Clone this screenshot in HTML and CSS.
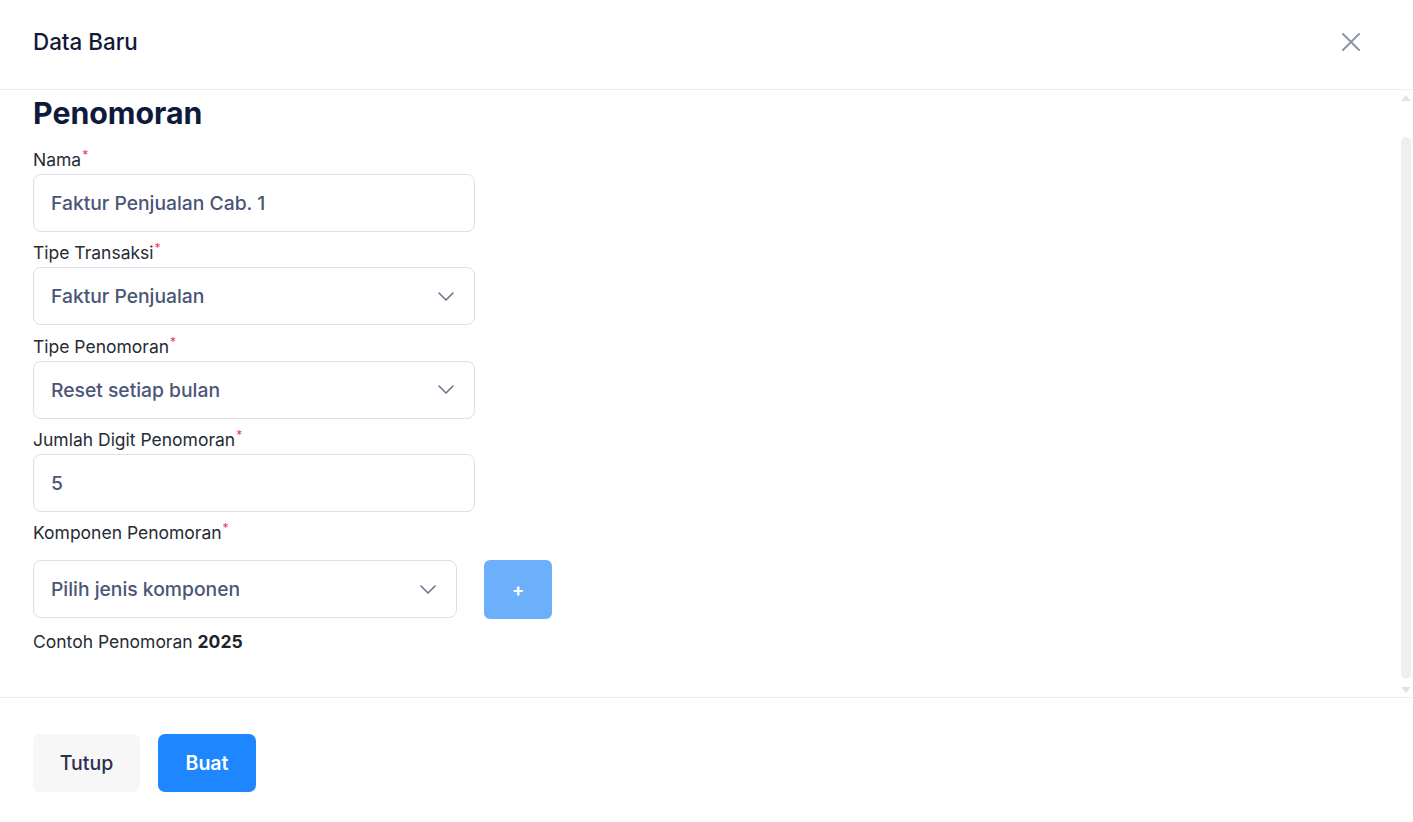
FILE: index.html
```html
<!DOCTYPE html>
<html lang="id">
<head>
<meta charset="utf-8">
<title>Data Baru</title>
<link rel="stylesheet" href="styles.css">
</head>
<body>
<div class="modal">
  <header class="modal-header">
    <h1 class="modal-title">Data Baru</h1>
    <button class="close-btn" aria-label="Tutup">
      <svg width="18" height="18" viewBox="0 0 18 18"><path d="M1 1 L17 17 M17 1 L1 17" stroke="#8e94ab" stroke-width="2" stroke-linecap="round" fill="none"/></svg>
    </button>
  </header>
  <main class="modal-body">
    <h2 class="section-title">Penomoran</h2>
    <div class="field">
      <label class="label">Nama<span class="req">*</span></label>
      <div class="control">Faktur Penjualan Cab. 1</div>
    </div>
    <div class="field">
      <label class="label">Tipe Transaksi<span class="req">*</span></label>
      <div class="control select">Faktur Penjualan
        <svg class="chev" width="16" height="9" viewBox="0 0 16 9"><path d="M1 1 L8 8 L15 1" stroke="#6b7490" stroke-width="1.6" fill="none" stroke-linecap="round" stroke-linejoin="round"/></svg>
      </div>
    </div>
    <div class="field">
      <label class="label">Tipe Penomoran<span class="req">*</span></label>
      <div class="control select">Reset setiap bulan
        <svg class="chev" width="16" height="9" viewBox="0 0 16 9"><path d="M1 1 L8 8 L15 1" stroke="#6b7490" stroke-width="1.6" fill="none" stroke-linecap="round" stroke-linejoin="round"/></svg>
      </div>
    </div>
    <div class="field">
      <label class="label">Jumlah Digit Penomoran<span class="req">*</span></label>
      <div class="control">5</div>
    </div>
    <div class="field field-komponen">
      <label class="label">Komponen Penomoran<span class="req">*</span></label>
      <div class="komponen-row">
        <div class="control select narrow">Pilih jenis komponen
          <svg class="chev" width="16" height="9" viewBox="0 0 16 9"><path d="M1 1 L8 8 L15 1" stroke="#6b7490" stroke-width="1.6" fill="none" stroke-linecap="round" stroke-linejoin="round"/></svg>
        </div>
        <button class="add-btn">+</button>
      </div>
    </div>
    <p class="example">Contoh Penomoran <strong>2025</strong></p>
    <div class="scrollbar">
      <span class="sb-up"></span>
      <span class="sb-thumb"></span>
      <span class="sb-down"></span>
    </div>
  </main>
  <footer class="modal-footer">
    <button class="btn btn-secondary">Tutup</button>
    <button class="btn btn-primary">Buat</button>
  </footer>
</div>
</body>
</html>
```
FILE: styles.css
```css
* { box-sizing: border-box; }
html, body { margin: 0; padding: 0; background: #ffffff; }
body {
  font-family: Inter, "Noto Sans", "Liberation Sans", sans-serif;
  color: #2a2e3b;
  width: 1413px;
  height: 822px;
  overflow: hidden;
}
.modal { display: flex; flex-direction: column; height: 822px; }
.modal-header {
  height: 90px;
  padding: 0 47px 0 33px;
  display: flex;
  align-items: center;
  justify-content: space-between;
  border-bottom: 1px solid #eceef2;
}
.modal-title {
  margin: 0;
  font-size: 22.4px;
  font-weight: 500;
  color: #111a38;
  line-height: 26px;
  position: relative;
  top: -3px;
}
.close-btn {
  border: 0; background: none; padding: 6px; display: flex; cursor: pointer;
  position: relative; top: -3px;
}
.modal-body {
  position: relative;
  flex: 1;
  padding: 5px 33px 0 33px;
  border-bottom: 1px solid #eceef2;
}
.section-title {
  margin: 0 0 17px 0;
  font-size: 30.3px;
  line-height: 36px;
  font-weight: 700;
  color: #0f1a3b;
}
.field { display: flex; flex-direction: column; margin-bottom: 9.33px; }
.label {
  font-size: 17.5px;
  line-height: 24px;
  color: #272b36;
  margin-bottom: 2px;
}
.req { color: #f2355b; font-size: 12px; vertical-align: top; position: relative; top: -5px; margin-left: 1px; }
.control {
  width: 442px;
  height: 58px;
  border: 1px solid #dcdfea;
  border-radius: 8px;
  padding: 0 18px 0 17px;
  display: flex;
  align-items: center;
  justify-content: space-between;
  font-size: 19.3px;
  color: #4a5577;
  font-weight: 500;
}
.chev { margin-right: 2px; }
.field-komponen .label { margin-bottom: 14.67px; }
.komponen-row { display: flex; gap: 27px; align-items: center; }
.control.narrow { width: 424px; }
.add-btn {
  width: 68px; height: 59px;
  border: 0; border-radius: 6px;
  background: #6cb0fc;
  color: #ffffff;
  font-family: inherit;
  font-size: 18px; font-weight: 700;
}
.example {
  margin: 11px 0 0 0;
  font-size: 17.5px;
  line-height: 24px;
  color: #272b36;
}
.example strong { color: #1f222b; font-weight: 700; }
.scrollbar {
  position: absolute;
  right: 1px; top: 0; bottom: 0;
  width: 12px;
}
.sb-up {
  position: absolute; left: 1px; top: 5px;
  width: 0; height: 0;
  border-left: 5px solid transparent; border-right: 5px solid transparent;
  border-bottom: 6px solid #e3e3e6;
}
.sb-thumb {
  position: absolute; left: 1px; top: 47px; bottom: 18px;
  width: 10px; border-radius: 5px; background: #efeff2;
}
.sb-down {
  position: absolute; left: 1px; bottom: 4px;
  width: 0; height: 0;
  border-left: 5px solid transparent; border-right: 5px solid transparent;
  border-top: 6px solid #e3e3e6;
}
.modal-footer {
  height: 124px;
  padding: 36px 33px 0 33px;
  display: flex;
  gap: 18px;
  align-items: flex-start;
}
.btn {
  height: 58px;
  border: 0;
  border-radius: 7px;
  font-family: inherit;
  font-size: 19.5px;
  padding: 0;
}
.btn-secondary { background: #f7f7f8; color: #2b3150; font-weight: 500; width: 107px; }
.btn-primary { background: #1e87ff; color: #ffffff; font-weight: 600; width: 98px; }
```
